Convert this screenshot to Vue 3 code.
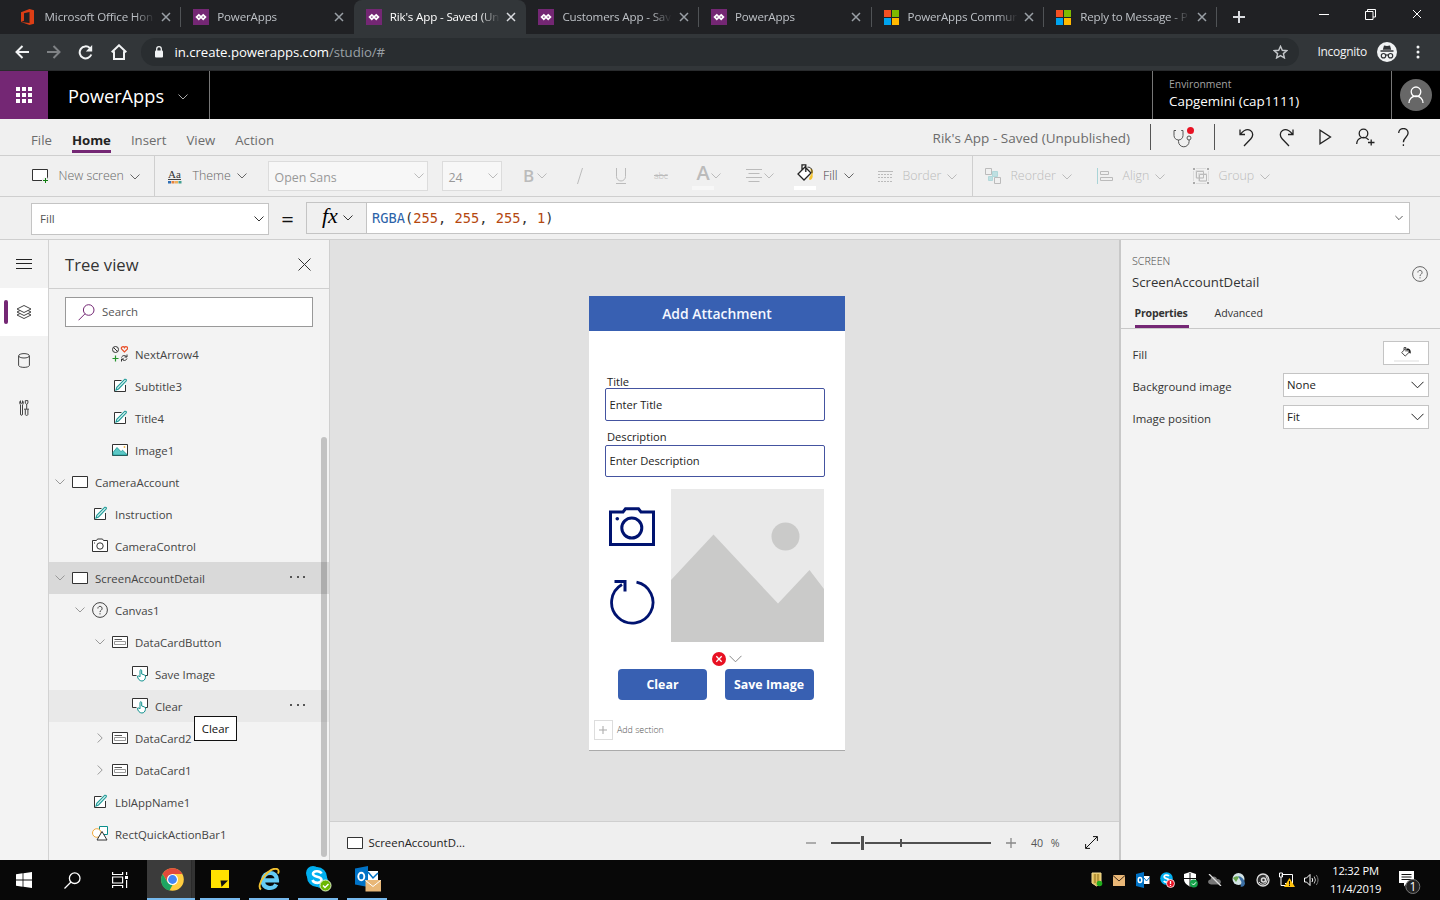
<script setup>
import { h } from 'vue'

const library = {
  close: [10, 10, '<path d="M1 1l8 8M9 1l-8 8"/>'],
  chevron: [10, 6, '<path d="M.5 .5l4.5 4.5 4.5-4.5"/>'],
  chevronWide: [13, 8, '<path d="M.5 .8l6 6 6-6"/>'],
  chevronRight: [6, 10, '<path d="M.7 .5l4.5 4.5-4.5 4.5"/>'],
  office: [13, 16, '<path fill="#dc3e15" stroke="none" d="M0 3.3L8.5 0 13 1.300v13.400L8.500 16 0 12.900l8.500 1V2.900L3 4.200v7.600L0 12.900z"/>'],
  power: [16, 16, '<path fill="#742774" stroke="none" d="M0 0h16v16H0z"/><g fill="none" stroke="#fff" stroke-width="1.700"><path d="M5.800 5.900L8 8l-2.200 2.200L3.600 8zM10.200 5.900L12.400 8l-2.200 2.200L8 8z"/></g>'],
  windows4: [15, 15, '<g stroke="none"><path fill="#f25022" d="M0 0h7v7H0z"/><path fill="#7fba00" d="M8 0h7v7H8z"/><path fill="#00a4ef" d="M0 8h7v7H0z"/><path fill="#ffb900" d="M8 8h7v7H8z"/></g>'],
  plus: [12, 12, '<path stroke-width="2" d="M6 0v12M0 6h12"/>'],
  minimize: [10, 10, '<path d="M0 5.500h10"/>'],
  restore: [11, 11, '<path d="M.5 2.500h7.500v8H.5zM2.500 2.500v-2h8v7.500H8"/>'],
  back: [14, 14, '<path stroke-width="2" d="M14 7H1.500M7.500 1L1.500 7l6 6"/>'],
  forward: [14, 14, '<path stroke-width="2" d="M0 7h12.500M6.500 1l6 6-6 6"/>'],
  reload: [15, 15, '<path stroke-width="2" d="M13.300 9.500A6 6 0 1 1 11.800 3"/><path fill="currentColor" stroke="none" d="M14.200 0v6.500H7.800z"/>'],
  home: [16, 16, '<path stroke-width="2" d="M0.700 8.200L8 1.300l7.300 6.900M3 7.300V15h10V7.300"/>'],
  lock: [8, 12, '<rect x="0" y="4.500" width="8" height="7" rx="1" fill="currentColor" stroke="none"/><path stroke-width="1.300" d="M1.700 5V3a2.300 2.300 0 0 1 4.600 0v2"/>'],
  star: [15, 14, '<path stroke-width="1.400" d="M7.500 1.300l1.800 4 4.400.4-3.300 2.900 1 4.300-3.900-2.300-3.900 2.300 1-4.300L1.300 5.700l4.400-.4z"/>'],
  incognito: [20, 20, '<circle cx="10" cy="10" r="10" fill="#f1f3f4" stroke="none"/><path fill="#303336" stroke="none" d="M7 3.500l3 .6 3-.6 1.200 4.200H5.800zM3.500 8.300h13v1.400h-13z"/><g stroke="#303336" stroke-width="1.200"><circle cx="6.500" cy="13.700" r="2.200"/><circle cx="13.500" cy="13.700" r="2.200"/><path d="M8.700 13.300q1.300-.8 2.600 0"/></g>'],
  kebab: [4, 14, '<g fill="currentColor" stroke="none"><circle cx="2" cy="2" r="1.500"/><circle cx="2" cy="7" r="1.500"/><circle cx="2" cy="12" r="1.500"/></g>'],
  waffle: [16, 16, '<path fill="#fff" stroke="none" d="M0 0h4v4H0zM6 0h4v4H6zM12 0h4v4h-4zM0 6h4v4H0zM6 6h4v4H6zM12 6h4v4h-4zM0 12h4v4H0zM6 12h4v4H6zM12 12h4v4h-4z"/>'],
  avatar: [32, 32, '<circle cx="16" cy="16" r="16" fill="#676767" stroke="none"/><g stroke="#fff" stroke-width="1.300"><circle cx="16" cy="12.800" r="4.800"/><path d="M9 24a7 7 0 0 1 14 0"/></g>'],
  stethoscope: [22, 22, '<g stroke="#555"><path d="M4 4.500H2v5a4.500 4.500 0 0 0 9 0v-5H9.200M6.500 14v1.500a5.300 5.300 0 0 0 10.600 0V14" /><circle cx="17" cy="12" r="2"/></g><circle cx="18.500" cy="4.500" r="3.500" fill="#e81123" stroke="none"/>'],
  undo: [15, 19, '<path stroke-width="1.300" d="M1 1.500v5h5M1.300 6.300C4.500 2.500 8 .2 11.500 2.500c3.200 2.300 2.500 6 .4 8.200L5 18"/>'],
  redo: [15, 19, '<path stroke-width="1.300" d="M14 1.500v5H9M13.700 6.300C10.500 2.500 7 .2 3.500 2.500.3 4.800 1 8.500 3.100 10.700L10 18"/>'],
  play: [13, 16, '<path stroke-width="1.300" d="M1 1.200v13.600L11.500 8z"/>'],
  share: [19, 19, '<g stroke-width="1.300"><circle cx="7.500" cy="5.500" r="4.300"/><path d="M.7 16a6.800 6.800 0 0 1 12-4.200M15.200 11.500v6M12 14.500h6.500"/></g>'],
  question: [11, 19, '<path stroke-width="1.300" d="M.7 5a4.700 4.500 0 0 1 9.400 0c0 4-4.700 4.500-4.700 9.300M5.400 16.300v1.700"/>'],
  newScreen: [17, 15, '<path fill="#fff" stroke="#333" d="M.5.5h15v11H.5z"/><path stroke="#f0f0f0" stroke-width="4" d="M13.500 8.500v7M10 11.500h7"/><path stroke="#107c10" d="M13.500 9v5M11 11.500h5"/>'],
  theme: [14, 13, '<g stroke="none"><path fill="#2f6fb5" d="M0 10h3v2.500H0z"/><path fill="#e5833e" d="M3.500 10h3v2.500h-3z"/><path fill="#efb05b" d="M7 10h3v2.500H7z"/><path fill="#419f91" d="M10.500 10h3v2.500h-3z"/></g>'],
  slash: [6, 16, '<path d="M5.500 0L.5 16"/>'],
  underline: [12, 17, '<path d="M1.500 0v8.500a4.500 4.500 0 0 0 9 0V0M1 15.500h10"/>'],
  alignText: [16, 14, '<path d="M0 .5h16M2.500 4.500h11M0 8.500h16M2.500 12.500h11"/>'],
  bucket: [17, 17, '<path fill="#fff" stroke="#222" stroke-width="1.300" d="M8 3L1 10l6 6 7-7-6-6zM5 6V.800h3.800V8"/><path fill="#f4c430" stroke="none" d="M13.200 4.500c2.800 0 3.300 3 2.300 6.500 1 2.500-1.500 5.800-3 4.800-1.200-1.500 1-4 2-6z"/><path stroke="#222" d="M10.500 3.200c3.500-.2 5 2 4.300 6"/>'],
  bucketSmall: [10, 10, '<path stroke="#333" stroke-width=".9" d="M4.500 1.800L.7 5.500l3.500 3.600L8 5.400zM3 3V.600h2v4"/><path fill="#111" stroke="none" d="M6 1.500c3 0 4 1.500 3.700 5L8.200 6q.3-3-2.200-3z"/>'],
  border: [15, 11, '<path d="M0 .5h15"/><path stroke-dasharray="2 1" d="M0 3.500h15M0 6.500h15M0 10.500h15"/>'],
  reorder: [16, 16, '<path fill="#bfe0e2" stroke="#b2d8da" d="M7.500 3.500h5v5h-5zM3.500 8.500h4v4h-4z"/><path fill="#f0f0f0" stroke="#bbb" d="M.5.5h6v6h-6zM9.500 9.500h6v6h-6z"/>'],
  align: [16, 16, '<path stroke="#a9d4d7" d="M.5 0v16"/><path d="M3.500 3.500h8v3h-8zM3.500 9.500h12v3h-12z"/>'],
  group: [16, 16, '<path d="M3 2.500h7.500V10H3zM5.500 5.500h8V13h-8zM3 .5h10M3 15.500h10M.5 3v10M15.500 3v10" stroke-opacity=".35"/><path d="M3.500 3.500h7V10h-7zM6.500 6.500h7V13h-7z"/><path stroke="none" fill="#aaa" d="M0 0h2v2H0zM14 0h2v2h-2zM0 14h2v2H0zM14 14h2v2h-2z"/>'],
  menu: [16, 10, '<path d="M0 .5h16M0 4.500h16M0 9.500h16" stroke="#222"/>'],
  layers: [16, 14, '<path fill="#fff" d="M1 10l7 3.500L15 10l-3-1.500H4z"/><path fill="#fff" d="M1 7l7 3.500L15 7l-3-1.500H4z"/><path fill="#fff" d="M1 4l7 3.500L15 4 8 .5z"/>'],
  database: [12, 15, '<path d="M.6 3v9.500C1.500 15 10.500 15 11.400 12.500V3"/><ellipse cx="6" cy="2.800" rx="5.400" ry="2.200"/>'],
  tools: [10, 16, '<path d="M1.500 .8v2.400h2V.8M.6 2.500c0 1.500 1 2 .9 2.500v9c0 1.800 2 1.800 2 0V5c0-.5 1-1 .9-2.500 0-1-.5-1.500-.9-1.700M.6 2.500c0-1 .5-1.500.9-1.700M7.700 4v5M6.300.6h2.600v2.600L7.700 4.300 6.300 3.200zM5 9.200h5M6.300 9.500v5c0 1.200 2.600 1.200 2.600 0v-5"/>'],
  closeBig: [13, 13, '<path d="M.5.500l12 12M12.500.500l-12 12"/>'],
  search: [17, 17, '<circle cx="10.700" cy="6" r="5.300"/><path d="M7 9.800L.5 16.300"/>'],
  icons: [16, 16, '<g stroke="#333"><circle cx="3.500" cy="3.500" r="3"/><path d="M1.500 1.500l4 4M9.500 11.500c1-2.500 4-2.500 5-.5M15 8.500V11h-2.500M15 12.500c-1 2.500-4 2.500-5 .5M9.500 15.500V13H12"/></g><path stroke="#e8502a" stroke-width="1.200" d="M12.500 6L9.500 3c-.8-2 2-3.300 3-1.300 1-2 3.800-.7 3 1.300z"/><path stroke="#25942c" stroke-width="1.200" d="M3.500 9.500v6M.5 12.500h6"/>'],
  label: [16, 16, '<path fill="#fff" stroke="#333" d="M9.500 2.500h-7v11h11V7"/><path fill="#d9f2f1" stroke="#1d9a97" stroke-width="1.100" d="M4 12l.8-2.700L12.800 1.200q1.800-.2 1.500 1.600L6.500 11z"/>'],
  image: [16, 16, '<path fill="#fff" stroke="#333" d="M.5 2.500h15v11H.5z"/><path fill="#5cc8c6" stroke="#159490" stroke-width=".8" d="M1 10.500l4-5 4 4.200 1.500-1.500L15 12.500v.6H1z"/><circle cx="12.500" cy="5" r=".9" fill="#f4b53f" stroke="none"/>'],
  screen: [16, 16, '<path fill="#fff" stroke="#333" d="M.5 2.500h15v11H.5z"/>'],
  camera: [16, 16, '<path fill="#fff" stroke="#333" d="M.5 2.500h4l1-1.500h5l1 1.500h4v11H.5z"/><circle cx="8" cy="8" r="3.200" stroke="#333"/><path stroke="#333" d="M2 5h1"/>'],
  help: [16, 16, '<circle cx="8" cy="8" r="7.400"/><path d="M5.900 6.500a2.100 2.100 0 1 1 3.400 1.600c-.8.6-1.300 1-1.300 2M8 11.200v1.200"/>'],
  card: [16, 16, '<path fill="#fff" stroke="#333" d="M.5 2.500h15v11H.5z"/><path stroke="#555" d="M2.500 5.500H10"/><path stroke="#999" d="M2.500 7.500h11v3h-11z"/>'],
  button: [16, 16, '<path fill="#fff" stroke="#333" d="M4.500 9.500h-4v-9h15v9H13"/><path fill="#fff" stroke="#0b8f8c" d="M8 10.500V4.300q.9-1.300 1.700 0V8l3 1q1.300.5.700 2.500c-.3 2-1.500 3.500-3.500 3.500-2.200 0-4.400-2.300-4.400-4.800 1-.5 1.800 0 2.500.8z"/>'],
  shapes: [16, 16, '<path fill="#fff" stroke="#0b8f8c" d="M7.500.5h8v8h-8z"/><circle cx="4.800" cy="7" r="4.300" fill="#fff" stroke="#f2a93b"/><path fill="#fff" stroke="#333" d="M10 5.500l5 8.500H5z"/>'],
  expand: [13, 13, '<path stroke="#111" d="M.7 12.300L12.300.7M8 .6h4.400V5M.6 8v4.400H5"/>'],
  minus: [10, 2, '<path stroke-width="1.300" d="M0 1h10"/>'],
  thinPlus: [10, 10, '<path stroke-width="1.300" d="M5 0v10M0 5h10"/>'],
  bigCamera: [46, 40, '<path stroke-width="3" d="M1.500 5H14l2.500-3.200h13L32 5h12.500v32.500h-43z"/><circle cx="22.800" cy="21" r="10" stroke-width="3"/><circle cx="8.300" cy="11.700" r="1.800" fill="#001370" stroke="none"/>'],
  bigReload: [46, 46, '<path stroke-width="2.800" d="M27.500 3.200A20.700 20.700 0 1 1 13 5.500"/><path stroke-width="3" d="M5.500 2.500H16v10"/>'],
  placeholder: [153, 153, '<g stroke="none"><path fill="#e9e9e9" d="M0 0h153v153H0z"/><path fill="#cacac9" d="M0 91L42.500 45.500l64.500 69L138.500 81 153 100v53H0z"/><circle cx="114.500" cy="47.500" r="14" fill="#cacac9"/></g>'],
  error: [14, 14, '<circle cx="7" cy="7" r="7" fill="#e81123" stroke="none"/><path stroke="#fff" stroke-width="1.300" d="M4.300 4.300l5.400 5.400M9.700 4.300L4.300 9.700"/>'],
  start: [16, 16, '<path fill="#fff" stroke="none" d="M0 2.300L6.600 1.300v6.300H0zM7.400 1.200L16 0v7.600H7.400zM0 8.400h6.600v6.300L0 13.700zM7.400 8.400H16V16l-8.600-1.200z"/>'],
  taskSearch: [17, 17, '<g stroke="#fff" stroke-width="1.300"><circle cx="10.700" cy="6.200" r="5.300"/><path d="M7 10L.5 16.500"/></g>'],
  taskView: [17, 16, '<g stroke="#fff" stroke-width="1.200"><path d="M.6 0v2.500h10V0M.6 16v-2.500h10V16M.6 5h10v6H.6zM14.600 0v3M14.600 8v8"/></g><path fill="#fff" stroke="none" d="M13 4h3v3h-3z"/>'],
  chrome: [23, 23, '<g stroke="none"><circle cx="11.500" cy="11.500" r="11.300" fill="#ffcd40"/><path fill="#e14a3b" d="M1.700 5.900A11.300 11.300 0 0 1 21.300 6H11.500l-4.800 8.300z"/><path fill="#1da462" d="M1.700 5.900l4.900 8.400 4.900 2.700-3 5.500C1 21-2.100 12.500 1.700 5.900z"/><circle cx="11.500" cy="11.500" r="5.500" fill="#fff"/><circle cx="11.500" cy="11.500" r="4.400" fill="#4285f4"/></g>'],
  sticky: [18, 18, '<path fill="#ffe100" stroke="none" d="M0 0h18v18H0z"/><path fill="#111" stroke="none" d="M9.500 10.500H17L10.500 17z"/>'],
  ie: [22, 23, '<path stroke="#65ccf5" stroke-width="4.200" d="M4.500 12.300H19c0-10-13.500-9.500-14.200 0-.3 9 10.700 9.800 13.500 4"/><path stroke="#f2c230" stroke-width="1.900" d="M3 21.500C-3 17 12-2.500 19.500 1.200c1.500 1 1.200 3 .5 4.500"/>'],
  skype: [28, 26, '<g stroke="none"><circle cx="7" cy="7" r="7" fill="#00aff0"/><circle cx="15" cy="15" r="7" fill="#00aff0"/><circle cx="11" cy="11" r="10" fill="#00aff0"/></g><path stroke="#fff" stroke-width="2.600" d="M15.500 7.500C14 4.200 6.700 4.500 7 8c.3 3.500 8.500 2 8.500 5.800 0 4-7.500 4.200-9 .2"/><circle cx="19.500" cy="19.500" r="5.500" fill="#6bb700" stroke="#dff0c8"/><path stroke="#fff" stroke-width="1.400" d="M17 19.500l2 2 3.500-3.500"/>'],
  outlook: [26, 26, '<g stroke="none"><path fill="#fff" d="M11 5h12v11H11z"/><path fill="#0072c6" d="M0 2.500L13 0v21L0 18.500z"/></g><path stroke="#0072c6" stroke-width="1.500" d="M13 6l5 6 5-5"/><ellipse cx="6.300" cy="10.500" rx="3" ry="3.800" stroke="#fff" stroke-width="1.900"/><path fill="#e8b777" stroke="none" d="M10.500 14H26v11.500H10.500z"/><path stroke="#fff" d="M10.500 14.500l7.500 6 7.500-6"/>'],
  trayShield: [12, 16, '<path fill="#e0bd5b" stroke="#f4dd94" d="M1 1h9v10l-4.500 3L1 11z"/><path stroke="#8c6d1d" d="M4 2v9M7 2v9"/><circle cx="8.500" cy="11.500" r="2.800" fill="#20ad1c" stroke="none"/>'],
  trayMail: [12, 11, '<path fill="#e9b777" stroke="none" d="M0 0h12v11H0z"/><path stroke="#3d2b18" d="M0 .5L6 6l6-5.500"/>'],
  trayOutlook: [14, 16, '<path fill="#fff" stroke="none" d="M7 4h6.500v8H7z"/><path fill="#0072c6" stroke="none" d="M0 2l8-2v16l-8-2z"/><path stroke="#0072c6" d="M8 6l2.500 3L14 5"/><ellipse cx="4" cy="8" rx="1.800" ry="2.500" stroke="#fff" stroke-width="1.400"/>'],
  traySkype: [15, 16, '<circle cx="6.500" cy="6.500" r="6.300" fill="#00aff0" stroke="none"/><path stroke="#fff" stroke-width="1.700" d="M9 4C7.500 2.500 4 2.800 4.200 5c.3 2 4.800 1.200 4.800 3.500 0 2.200-4 2-5.200.4"/><circle cx="10.500" cy="11.500" r="4" fill="#e81123" stroke="#fff" stroke-width=".8"/><path stroke="#fff" stroke-width="1.300" d="M10.500 9v3M10.500 13v1"/>'],
  trayDefender: [14, 16, '<path fill="#fff" stroke="none" d="M0 2l6-2 6 2v5c0 4-3 6-6 7.500C3 13 0 11 0 7z"/><path stroke="#111" d="M6 1v13M0 6.500h12"/><circle cx="9.800" cy="11.500" r="4" fill="#16a34a" stroke="none"/><path stroke="#fff" d="M8 11.500l1.500 1.500 2.500-2.700"/>'],
  trayCloud: [14, 12, '<path fill="#777" stroke="none" d="M3 10.500C-1 10-.5 5.500 2.500 5.500 3 1.500 8.500 1.500 9 5c4-.5 5.500 4.500 1.500 5.500z"/><path stroke="#ddd" stroke-width="1.300" d="M1 0l12 12"/>'],
  trayVpn: [14, 16, '<circle cx="6.500" cy="7" r="6" fill="#d3e3e5" stroke="none"/><path fill="#3b6fa5" stroke="none" d="M6 4q6 1 7 7.500-1 4-4.500 3L9.500 10z"/><path fill="#69a84f" stroke="none" d="M1 6q3-3 6-1L4 10z"/>'],
  trayAt: [14, 14, '<circle cx="7" cy="7" r="6" fill="#333" stroke="#ddd" stroke-width="1.300"/><circle cx="7.500" cy="7" r="2" stroke="#ddd" stroke-width="1.500"/><path stroke="#ddd" d="M10 3q3 3 0 7-4 3-7-1"/>'],
  trayNet: [16, 16, '<path stroke="#fff" d="M3 4.500V2.500h10.500v9H6M.5 1v4h3V1zM2 5v8.500h5"/><path fill="#ffc20e" stroke="none" d="M10.500 6L16 15H5z"/><path stroke="#111" d="M10.500 9v3.500M10.500 13v1"/>'],
  traySound: [15, 14, '<path stroke="#fff" d="M.5 5h2L6 1.500v11L2.500 9h-2z"/><path stroke="#fff" d="M8 5q1.500 2 0 4"/><path stroke="#bbb" d="M10.200 3.500q2.500 3.500 0 7"/><path stroke="#777" d="M12.300 2q3.500 5 0 10"/>'],
  notify: [24, 24, '<path fill="#fff" stroke="none" d="M1 1h15v12H9l-3 3.500V13H1z"/><path stroke="#111" d="M3.500 4.500h10M3.500 7h10M3.500 9.500h10"/><circle cx="14.800" cy="16.500" r="7" fill="#222" stroke="#777"/>'],
}

// Renders a glyph from the library at its natural pixel size.
const Icon = ({ name }) => {
  const [w, hgt, body] = library[name]
  return h('svg', {
    class: 'icon', width: w, height: hgt, viewBox: `0 0 ${w} ${hgt}`,
    fill: 'none', stroke: 'currentColor', innerHTML: body,
  })
}
Icon.props = ['name']

const tabs = [
  { icon: 'office', text: 'Microsoft Office Hon' },
  { icon: 'power', text: 'PowerApps' },
  { icon: 'power', text: "Rik's App - Saved (Un", active: true },
  { icon: 'power', text: 'Customers App - Sav' },
  { icon: 'power', text: 'PowerApps' },
  { icon: 'windows4', text: 'PowerApps Commun' },
  { icon: 'windows4', text: 'Reply to Message - P' },
]

const menu = ['File', 'Home', 'Insert', 'View', 'Action']

const tree = [
  { level: 2, icon: 'icons', text: 'NextArrow4' },
  { level: 2, icon: 'label', text: 'Subtitle3' },
  { level: 2, icon: 'label', text: 'Title4' },
  { level: 2, icon: 'image', text: 'Image1' },
  { level: 0, icon: 'screen', text: 'CameraAccount', arrow: 'chevron' },
  { level: 1, icon: 'label', text: 'Instruction' },
  { level: 1, icon: 'camera', text: 'CameraControl' },
  { level: 0, icon: 'screen', text: 'ScreenAccountDetail', arrow: 'chevron', state: 'selected' },
  { level: 1, icon: 'help', text: 'Canvas1', arrow: 'chevron' },
  { level: 2, icon: 'card', text: 'DataCardButton', arrow: 'chevron' },
  { level: 3, icon: 'button', text: 'Save Image' },
  { level: 3, icon: 'button', text: 'Clear', state: 'hovered', tip: 'Clear' },
  { level: 2, icon: 'card', text: 'DataCard2', arrow: 'chevronRight' },
  { level: 2, icon: 'card', text: 'DataCard1', arrow: 'chevronRight' },
  { level: 1, icon: 'label', text: 'LblAppName1' },
  { level: 1, icon: 'shapes', text: 'RectQuickActionBar1' },
]

const apps = ['chrome', 'sticky', 'ie', 'skype', 'outlook']
const tray = ['trayShield', 'trayMail', 'trayOutlook', 'traySkype', 'trayDefender', 'trayCloud', 'trayVpn', 'trayAt', 'trayNet', 'traySound']
</script>

<template>
  <div class="desktop">
    <div class="tabstrip">
      <div v-for="(tab, i) in tabs" :key="i" class="tab" :class="{ active: tab.active, plain: i === 1 }">
        <span class="favicon"><Icon :name="tab.icon" /></span>
        <span class="tab-text">{{ tab.text }}</span>
        <Icon name="close" />
      </div>
      <div class="new-tab"><Icon name="plus" /></div>
      <div class="window-buttons"><Icon name="minimize" /><Icon name="restore" /><Icon name="close" /></div>
    </div>

    <div class="toolbar">
      <Icon name="back" /><Icon name="forward" class="dim" /><Icon name="reload" /><Icon name="home" />
      <div class="omnibox">
        <Icon name="lock" />
        <span class="url">in.create.powerapps.com<span class="path">/studio/#</span></span>
        <Icon name="star" />
      </div>
      <span class="incognito">Incognito</span>
      <Icon name="incognito" /><Icon name="kebab" class="kebab" />
    </div>

    <header class="suite">
      <div class="waffle"><Icon name="waffle" /></div>
      <div class="brand">PowerApps <Icon name="chevron" /></div>
      <div class="environment"><small>Environment</small><span>Capgemini (cap1111)</span></div>
      <div class="account"><Icon name="avatar" /></div>
    </header>

    <nav class="menubar">
      <span v-for="item in menu" :key="item" class="menu-item" :class="{ current: item === 'Home' }">{{ item }}</span>
      <span class="app-title">Rik's App - Saved (Unpublished)</span>
      <div class="actions">
        <span class="checker"><Icon name="stethoscope" /></span>
        <Icon name="undo" /><Icon name="redo" /><Icon name="play" /><Icon name="share" class="share" /><Icon name="question" class="question" />
      </div>
    </nav>

    <div class="ribbon">
      <div class="tool"><Icon name="newScreen" /><span>New screen</span><Icon name="chevron" /></div>
      <div class="rule"></div>
      <div class="tool theme"><span class="aa"><b>Aa</b><Icon name="theme" /></span><span>Theme</span><Icon name="chevron" /></div>
      <div class="select"><span>Open Sans</span><Icon name="chevron" /></div>
      <div class="select"><span>24</span><Icon name="chevron" /></div>
      <div class="tool off"><b class="bold">B</b><Icon name="chevron" /></div>
      <div class="tool off"><Icon name="slash" /></div>
      <div class="tool off"><Icon name="underline" /></div>
      <div class="tool off"><s>abc</s></div>
      <div class="tool off color"><span class="swatch"><b>A</b></span><Icon name="chevron" /></div>
      <div class="tool off"><Icon name="alignText" /><Icon name="chevron" /></div>
      <div class="tool fill"><span class="swatch"><Icon name="bucket" /></span><span>Fill</span><Icon name="chevron" /></div>
      <div class="tool off"><Icon name="border" /><span>Border</span><Icon name="chevron" /></div>
      <div class="rule"></div>
      <div class="tool off"><Icon name="reorder" /><span>Reorder</span><Icon name="chevron" /></div>
      <div class="tool off"><Icon name="align" /><span>Align</span><Icon name="chevron" /></div>
      <div class="tool off"><Icon name="group" /><span>Group</span><Icon name="chevron" /></div>
    </div>

    <div class="formula">
      <div class="property"><span>Fill</span><Icon name="chevron" /></div>
      <div class="equals">=</div>
      <div class="fx"><i>fx</i><Icon name="chevron" /></div>
      <div class="expression">
        <code><span class="fn">RGBA</span>(<em>255</em>, <em>255</em>, <em>255</em>, <em>1</em>)</code>
        <Icon name="chevron" />
      </div>
    </div>

    <main class="studio">
      <aside class="rail">
        <div><Icon name="menu" /></div>
        <div class="on"><Icon name="layers" /></div>
        <div><Icon name="database" /></div>
        <div><Icon name="tools" /></div>
      </aside>

      <section class="tree">
        <div class="tree-head"><h2>Tree view</h2><Icon name="closeBig" /></div>
        <div class="search"><Icon name="search" /><span>Search</span></div>
        <div v-for="row in tree" :key="row.text" class="row" :class="[row.state, 'level-' + row.level]">
          <span class="arrow"><Icon v-if="row.arrow" :name="row.arrow" /></span>
          <Icon :name="row.icon" />
          <span class="row-text">{{ row.text }}</span>
          <span v-if="row.state" class="more"><i></i><i></i><i></i></span>
          <span v-if="row.tip" class="tooltip">{{ row.tip }}</span>
        </div>
        <div class="scrollbar"></div>
      </section>

      <section class="stage">
        <div class="artboard">
          <div class="phone">
            <div class="phone-head">Add Attachment</div>
            <div class="fields">
              <label>Title</label>
              <div class="input">Enter Title</div>
              <label class="second">Description</label>
              <div class="input short">Enter Description</div>
            </div>
            <div class="media">
              <div class="media-icons"><Icon name="bigCamera" /><Icon name="bigReload" /></div>
              <Icon name="placeholder" />
            </div>
            <div class="warning"><Icon name="error" /><Icon name="chevronWide" /></div>
            <div class="buttons"><div>Clear</div><div>Save Image</div></div>
            <div class="add"><span class="box"><Icon name="thinPlus" /></span>Add section</div>
          </div>
        </div>
        <div class="status">
          <Icon name="screen" /><span class="crumb">ScreenAccountD...</span>
          <Icon name="minus" class="grey" />
          <div class="slider"><i class="thumb"></i><i class="tick"></i></div>
          <Icon name="thinPlus" class="grey" />
          <span class="zoom">40 &nbsp;%</span>
          <Icon name="expand" />
        </div>
      </section>

      <aside class="props">
        <div class="props-head">
          <div><small>SCREEN</small><strong>ScreenAccountDetail</strong></div>
          <Icon name="help" />
        </div>
        <div class="props-tabs"><span class="current">Properties</span><span>Advanced</span></div>
        <div class="prop"><span>Fill</span><div class="fill-box"><Icon name="bucketSmall" /></div></div>
        <div class="prop"><span>Background image</span><div class="drop">None<Icon name="chevronWide" /></div></div>
        <div class="prop"><span>Image position</span><div class="drop">Fit<Icon name="chevronWide" /></div></div>
      </aside>
    </main>

    <footer class="taskbar">
      <div class="sys"><Icon name="start" /></div>
      <div class="sys"><Icon name="taskSearch" /></div>
      <div class="sys"><Icon name="taskView" /></div>
      <div v-for="app in apps" :key="app" class="app" :class="app"><Icon :name="app" /></div>
      <div class="tray"><span v-for="t in tray" :key="t"><Icon :name="t" /></span></div>
      <div class="clock"><span>12:32 PM</span><span>11/4/2019</span></div>
      <div class="notify"><Icon name="notify" /><span>1</span></div>
    </footer>
  </div>
</template>

<style>
html, body { margin: 0; overflow: hidden; background: #000; }
</style>

<style scoped>
* { box-sizing: border-box; }
.desktop { width: 1440px; height: 900px; display: flex; flex-direction: column; overflow: hidden; font: 11.4px/16px "Open Sans", "Noto Sans", sans-serif; color: #333; white-space: nowrap; }
.desktop > * { flex: none; }
.icon { display: block; flex: none; }

.tabstrip { height: 34px; background: #202124; display: flex; padding-left: 8.600px; color: #bdc1c6; }
.tab { width: 172.600px; height: 34px; display: flex; align-items: center; padding: 0 9px 0 12px; position: relative; font-size: 11.600px; }
.tab::after { content: ""; position: absolute; right: 0; top: 7px; width: 1px; height: 20px; background: #505356; }
.tab.plain::after, .tab.active::after { display: none; }
.tab.active { background: #323639; color: #fff; border-radius: 8px 8px 0 0; }
.favicon { width: 24px; flex: none; }
.tab-text { width: 112px; overflow: hidden; flex: none; letter-spacing: -.16px; mask-image: linear-gradient(90deg, #000 80%, transparent 98%); }
.tab > .icon { margin-left: 4.500px; color: #9aa0a6; stroke-width: 1.500; }
.tab.active > .icon { color: #dadce0; }
.new-tab { width: 44px; padding: 11px 0 0 16px; color: #dadce0; }
.window-buttons { margin-left: auto; display: flex; gap: 36px; padding: 9px 18px 0 0; color: #fff; }

.toolbar { height: 37px; background: #323639; display: flex; align-items: center; padding: 0 20px 0 15px; color: #f1f3f4; border-bottom: 1px solid #292b2d; }
.toolbar > .icon { margin-right: 17.500px; }
.toolbar > .dim { color: #7f8285; }
.omnibox { width: 1158px; height: 28px; margin-left: -3.500px; border-radius: 14px; background: #292d30; display: flex; align-items: center; padding: 0 11px 0 14px; }
.url { margin-left: 12px; font-size: 13.200px; flex: 1; color: #fff; letter-spacing: -.05px; }
.path { color: #9aa0a6; }
.omnibox .icon:last-child { color: #c4c7ca; }
.incognito { margin: 0 9px 0 19px; font-size: 12px; width: 50px; letter-spacing: -.3px; }
.toolbar > .kebab { margin: 0 0 0 2px; }

.suite { height: 48px; background: #000; color: #fff; display: flex; }
.waffle { width: 48px; background: #742774; display: grid; place-items: center; }
.brand { width: 162px; border-right: 1px solid #777; font-size: 18.200px; padding: 1px 0 0 20px; display: flex; align-items: center; gap: 14px; }
.brand .icon { color: #aaa; margin-top: 2px; }
.environment { margin-left: auto; width: 239px; border-left: 1px solid #777; padding: 5px 0 0 16px; display: flex; flex-direction: column; }
.environment small { font-size: 10.400px; color: #a3a3a3; }
.environment span { font-size: 13.400px; line-height: 18px; }
.account { width: 49px; border-left: 1px solid #777; display: grid; place-items: center; }

.menubar { height: 37px; background: #f0f0f0; border-bottom: 1px solid #cfcfcf; display: flex; padding: 11px 0 0 31px; font-size: 13.200px; line-height: 20px; color: #6c6c6c; }
.menu-item { height: 23px; margin-right: 20px; }
.menu-item.current { font-weight: 700; color: #222; border-bottom: 3px solid #742774; }
.app-title { margin: -2px 20px 0 auto; font-size: 13.500px; }
.actions { height: 26px; margin-top: -6px; display: flex; align-items: center; color: #222; width: 290px; gap: 25px; }
.checker { width: 65px; height: 26px; border: solid #555; border-width: 0 1px; display: grid; place-items: center; }
.actions > .icon:nth-child(2) { margin-left: -1px; }
.actions > .share { margin-left: -1.500px; }
.actions > .question { margin-left: -2px; }

.ribbon { height: 41px; background: #f0f0f0; border-bottom: 1px solid #cfcfcf; padding-left: 32px; display: grid; align-items: center; grid-template-columns: 122px 14px 100px 174px 81px 54px 38px 39px 38px 54px 48px 84px 94px 13px 112px 96px 90px; font-size: 12.400px; }
.rule { height: 40px; width: 1px; background: #cfcfcf; }
.tool { display: flex; align-items: center; color: #666; font-weight: 300; }
.tool > span { margin: -1px 6px 0 9.500px; }
.tool > .icon:first-child + .icon { margin-left: 2px; }
.tool.off { color: #bbb; }
.tool .icon + span + .icon, .select .icon { margin-top: 1px; }
.theme > .aa { margin: 0; width: 15px; display: flex; flex-direction: column; line-height: 10px; }
.aa b { font: 11px/10px "Liberation Serif", serif; color: #333; border-bottom: 1px solid #444; width: 13px; }
.aa .icon { margin-top: -9px; }
.select { height: 30px; width: 160px; background: #f7f7f7; border: 1px solid #dcdcdc; display: flex; align-items: center; justify-content: space-between; padding: 3px 3px 0 5.500px; color: #999; font-size: 12.400px; }
.select + .select { width: 60px; }
.select .icon { color: #bbb; margin-top: -4px; }
.bold { font-size: 17px; width: 14px; font-weight: 600; }
.tool s { font-size: 9px; width: 16px; letter-spacing: -.2px; }
.tool > .swatch { margin: 1px 0 0; width: 22px; height: 26px; border-bottom: 4px solid #fff; display: flex; justify-content: center; }
.color > .swatch { border-bottom-color: #f7f7f7; }
.swatch b { font-size: 20px; line-height: 18px; font-weight: 600; }
.color > .icon { margin-left: -3px; }
.fill > span + span { margin-left: 7px; color: #444; }

.formula { height: 43px; background: #f0f0f0; display: flex; padding: 5px 0 0 31px; border-bottom: 1px solid #cfcfcf; }
.property { width: 238px; height: 32px; margin-top: 1px; background: #fff; border: 1px solid #c4c4c4; display: flex; align-items: center; justify-content: space-between; padding: 0 4px 0 8px; font-size: 11.600px; color: #555; }
.property .icon, .fx .icon { color: #333; }
.equals { width: 37px; text-align: center; font-size: 22px; line-height: 32px; color: #111; }
.fx { width: 60px; height: 32px; border: 1px solid #c4c4c4; border-right: 0; display: flex; align-items: center; gap: 4px; padding-left: 15px; }
.fx i { font: italic 22px/26px "Liberation Serif", serif; color: #000; width: 17px; margin-top: -4px; }
.expression { width: 1044px; height: 32px; background: #fff; border: 1px solid #c4c4c4; display: flex; align-items: center; justify-content: space-between; padding: 0 6px 0 5px; }
.expression code { font: 13.700px/20px "DejaVu Sans Mono", monospace; color: #333; }
.expression em { font-style: normal; color: #b5480f; }
.expression .fn { color: #2b62a8; }
.expression .icon { width: 8px; }

.studio { height: 620px; display: flex; background: #f3f3f3; }
.rail { width: 49px; border-right: 1px solid #d2d2d2; color: #444; }
.rail div { height: 48px; display: grid; place-items: center; position: relative; }
.rail .on { background: #fff; }
.rail .on::before { content: ""; position: absolute; left: 4px; top: 12px; width: 4px; height: 24px; border-radius: 2px; background: #742774; }

.tree { width: 281px; border-right: 1px solid #cfcfcf; position: relative; }
.tree-head { height: 49px; border-bottom: 1px solid #cfcfcf; display: flex; align-items: center; justify-content: space-between; padding: 1px 18.500px 0 16px; }
.tree-head h2 { margin: 0; font-size: 16.600px; line-height: 24px; font-weight: 500; }
.search { margin: 8px 0 11px 16px; width: 248px; height: 30px; background: #fff; border: 1px solid #999; display: flex; align-items: center; gap: 7px; padding-left: 12px; color: #555; }
.search .icon { color: #742774; }
.row { height: 32px; display: flex; align-items: center; position: relative; padding-left: 5px; color: #444; }
.level-1 { padding-left: 25px; }
.level-2 { padding-left: 45px; }
.level-3 { padding-left: 65px; }
.arrow { width: 11px; margin-right: 7px; display: grid; place-items: center; color: #999; }
.row-text { margin: 1px 0 0 7px; }
.selected { background: #d9d9d9; }
.hovered { background: #e9e9e9; }
.more { margin: -3px 24px 0 auto; display: flex; gap: 4.500px; }
.more i { width: 2px; height: 2px; background: #555; }
.tooltip { position: absolute; left: 145px; top: 26px; z-index: 2; width: 43px; height: 25px; border: 1px solid #111; background: #fff; color: #111; line-height: 23px; text-align: center; }
.scrollbar { position: absolute; right: 2px; top: 197px; width: 6px; height: 420px; border-radius: 3px; background: rgba(0, 0, 0, .2); }

.stage { width: 789px; display: flex; flex-direction: column; background: #e1e1e1; }
.artboard { flex: 1; padding: 56px 0 0 259px; }
.phone { width: 256px; height: 455px; background: #fff; border-bottom: 1px solid #aaa; display: flex; flex-direction: column; }
.phone-head { height: 35px; background: #3860b2; color: #f4f7ff; font-size: 13.900px; line-height: 35px; font-weight: 600; text-align: center; }
.fields { padding: 43px 0 0 15.500px; font-size: 11.150px; color: #222; }
.fields label { display: block; height: 14px; padding-left: 2.500px; line-height: 15px; }
.fields .second { margin-top: 8px; height: 16px; line-height: 16px; }
.input { width: 220.500px; height: 33px; border: 1.500px solid #4453a0; border-radius: 2px; line-height: 32px; padding-left: 4px; }
.input.short { height: 32px; line-height: 30px; }
.media { display: flex; padding: 12px 0 0 20px; gap: 16px; }
.media-icons { padding-top: 18px; display: flex; flex-direction: column; gap: 32px; color: #001370; }
.warning { display: flex; align-items: center; gap: 3px; padding: 10px 0 0 123px; color: #888; }
.buttons { display: flex; gap: 17.500px; padding: 3px 0 0 29px; color: #fff; font-size: 12.400px; font-weight: 700; }
.buttons div { width: 89px; height: 31px; border-radius: 4px; background: #3860b2; line-height: 32px; text-align: center; }
.add { display: flex; align-items: center; gap: 4px; margin: 19.500px 0 0 4.500px; font-size: 8.900px; color: #555; font-weight: 300; }
.box { width: 19.500px; height: 20px; border: 1px solid #ddd; display: grid; place-items: center; color: #aaa; }
.box .icon { width: 8px; height: 8px; }
.status { height: 39px; background: #efefef; border-top: 1px solid #cfcfcf; display: flex; align-items: center; padding: 3px 0 0 17px; }
.crumb { margin-left: 5.500px; width: 437.500px; color: #222; }
.status .grey { color: #888; }
.slider { width: 160px; height: 14px; margin: 0 15px; position: relative; display: flex; align-items: center; }
.slider::before { content: ""; width: 100%; height: 2px; background: #505050; }
.slider i { position: absolute; width: 2px; height: 8px; top: 3px; left: 69px; background: #505050; }
.slider .thumb { width: 3px; height: 14px; top: 0; left: 30px; box-shadow: 0 0 0 1px #efefef; }
.zoom { width: 54px; margin-left: 15px; font-size: 10.700px; word-spacing: 1px; color: #555; }

.props { flex: 1; border-left: 2px solid #c8c8c8; font-size: 11.400px; }
.props-head { height: 61px; display: flex; justify-content: space-between; align-items: center; padding: 6px 12.500px 0 11px; }
.props-head small { display: block; font-size: 10.700px; line-height: 18px; color: #444; font-weight: 300; margin-top: -4px; }
.props-head strong { display: block; font-size: 13.200px; line-height: 20px; font-weight: 400; margin-top: 2px; }
.props-head .icon { color: #666; }
.props-tabs { height: 28px; border-bottom: 1px solid #c8c8c8; display: flex; gap: 26px; padding: 4px 0 0 13.500px; font-size: 10.600px; line-height: 16px; margin-bottom: 9px; }
.props-tabs .current { height: 23px; width: 54px; border-bottom: 3px solid #742774; font-weight: 700; letter-spacing: -.2px; }
.prop { height: 32px; display: flex; align-items: center; justify-content: space-between; padding: 2px 11px 0 11.500px; }
.fill-box, .drop { background: #fff; border: 1px solid #c4c4c4; height: 24px; margin-top: -4px; }
.fill-box { width: 46px; display: grid; place-items: center; padding-bottom: 2px; position: relative; }
.fill-box::after { content: ""; position: absolute; left: 10px; bottom: 2px; width: 25px; height: 2px; background: #eee; }
.drop { width: 146px; display: flex; align-items: center; justify-content: space-between; padding: 0 4px 0 3px; color: #222; }

.taskbar { height: 40px; background: #080808; display: flex; color: #fff; }
.sys { width: 48px; display: grid; place-items: center; }
.app { width: 40px; margin-right: 9px; display: grid; place-items: center; border-bottom: 2px solid #76b9ed; }
.app.chrome { width: 48px; margin: 0 5px 0 3px; padding-left: 2px; background: linear-gradient(90deg, #3b3b3b 44px, #222 44px, #333 45px); }
.app.skype { padding-left: 3px; }
.app.outlook { padding-left: 2px; }
.tray { margin-left: auto; display: flex; }
.tray span { width: 24px; display: grid; place-items: center; }
.tray span:first-child { padding-left: 3px; }
.clock { width: 65px; display: flex; flex-direction: column; align-items: center; font-size: 11.200px; line-height: 18px; padding-top: 2px; letter-spacing: -.2px; }
.notify { width: 52px; padding: 10px 0 0 10px; position: relative; }
.notify span { position: absolute; left: 21px; top: 19px; width: 8px; font-size: 12px; text-align: center; }
</style>
